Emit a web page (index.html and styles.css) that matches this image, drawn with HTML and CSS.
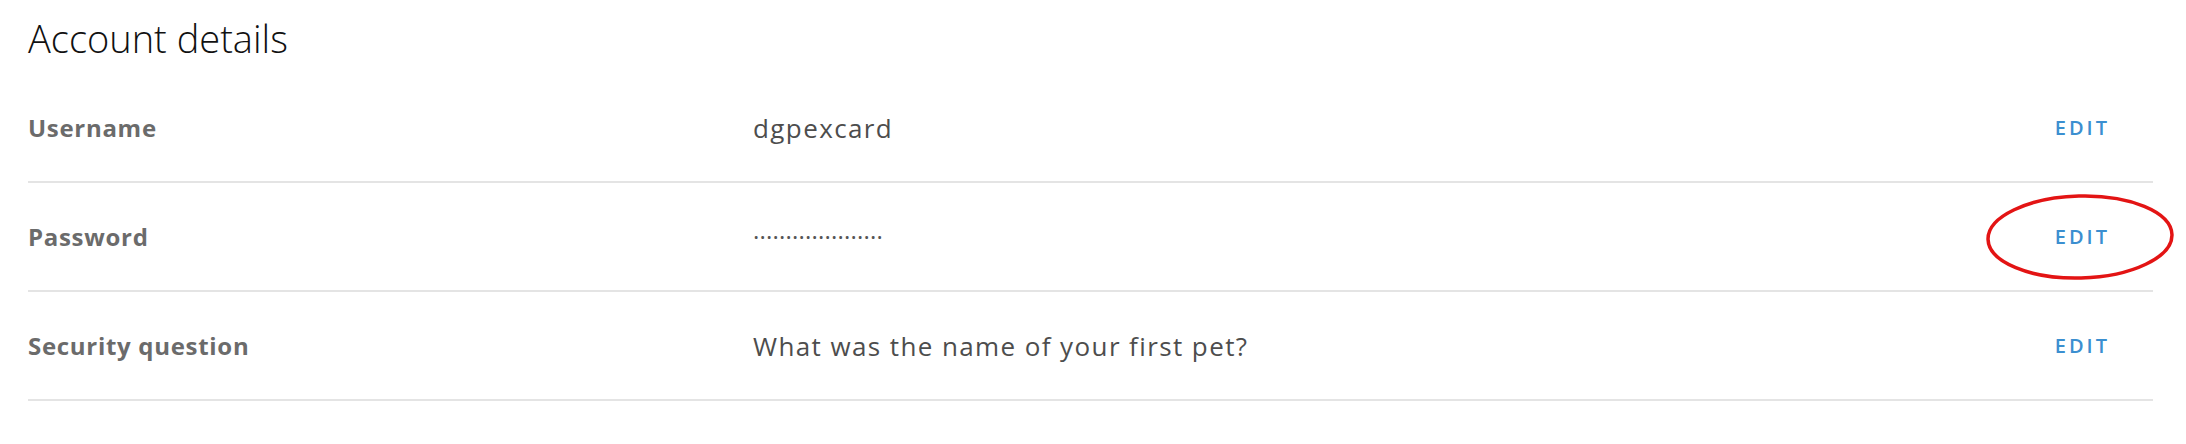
FILE: index.html
```html
<!DOCTYPE html>
<html lang="en">
<head>
    <meta charset="UTF-8">
    <title>Account details</title>
    <link rel="stylesheet" href="styles.css">
</head>
<body>
<div class="account">
    <h1 class="account-title">Account details</h1>

    <div class="detail-row">
        <div class="detail-label">Username</div>
        <div class="detail-value">dgpexcard</div>
        <a class="detail-edit" href="#">Edit</a>
    </div>

    <div class="detail-row">
        <div class="detail-label">Password</div>
        <div class="detail-value mask">····················</div>
        <a class="detail-edit circled" href="#">
            Edit
            <svg class="ring" width="192" height="90" viewBox="0 0 192 90">
                <ellipse cx="96" cy="45" rx="92" ry="41" fill="none" stroke="#e31414" stroke-width="3.5" transform="rotate(-1.5 96 45)"/>
            </svg>
        </a>
    </div>

    <div class="detail-row">
        <div class="detail-label">Security question</div>
        <div class="detail-value">What was the name of your first pet?</div>
        <a class="detail-edit" href="#">Edit</a>
    </div>
</div>
</body>
</html>
```

FILE: styles.css
```css
* {
    margin: 0;
    padding: 0;
    box-sizing: border-box;
}

body {
    font-family: 'Open Sans', sans-serif;
    background-color: #fff;
    color: #4a4a4a;
}

.account {
    padding: 0 33px 0 28px;
}

.account-title {
    font-size: 38px;
    font-weight: 300;
    line-height: 44px;
    color: #111;
    padding-top: 16px;
    margin-bottom: 14px;
}

.detail-row {
    display: grid;
    grid-template-columns: 725px 1fr auto;
    align-items: center;
    min-height: 109px;
    padding-right: 43px;
    border-bottom: 2px solid #e4e4e4;
}

.detail-label {
    font-size: 24px;
    font-weight: 700;
    letter-spacing: 0.7px;
    color: #6b6b6b;
}

.detail-value {
    font-size: 26px;
    letter-spacing: 1.4px;
    color: #4d4d4d;
}

.mask {
    font-size: 24px;
    letter-spacing: 0.2px;
    color: #555;
}

.detail-edit {
    font-size: 20px;
    font-weight: 600;
    letter-spacing: 3px;
    text-transform: uppercase;
    text-decoration: none;
    color: #3b8fd0;
}

.circled {
    position: relative;
}

.ring {
    position: absolute;
    right: -66px;
    top: -31px;
}
```
